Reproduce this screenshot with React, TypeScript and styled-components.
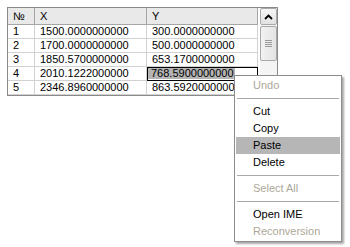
import React from "react";
import styled, { createGlobalStyle } from "styled-components";

const GlobalStyle = createGlobalStyle`
  html, body { margin: 0; padding: 0; background: #ffffff; }
  body { font-family: "Liberation Sans", "DejaVu Sans", Arial, sans-serif; }
`;

const Page = styled.div`
  position: relative;
  width: 350px;
  height: 247px;
  padding: 7px 0 0 7px;
  box-sizing: border-box;
  background: #ffffff;
  overflow: hidden;
`;

const Frame = styled.div`
  display: flex;
  width: 271px;
  border: 1px solid #8a8a8a;
  box-sizing: border-box;
  background: #ffffff;
`;

const TableArea = styled.div`
  display: flex;
  flex-direction: column;
  width: 250px;
`;

const Row = styled.div<{ $header?: boolean }>`
  display: grid;
  grid-template-columns: 27px 112px 111px;
  height: ${(p) => (p.$header ? 17 : 14)}px;
  background: ${(p) => (p.$header ? "#e9e9e9" : "#ffffff")};
`;

const Cell = styled.div<{ $header?: boolean; $selected?: boolean }>`
  box-sizing: border-box;
  border-right: 1px solid ${(p) => (p.$header ? "#a6a6a6" : "#d2d2d2")};
  border-bottom: 1px solid ${(p) => (p.$header ? "#a6a6a6" : "#d2d2d2")};
  padding-left: ${(p) => (p.$selected ? 1 : 5)}px;
  font-size: 11px;
  line-height: ${(p) => (p.$header ? 16 : 13)}px;
  color: #000000;
  white-space: nowrap;
  overflow: hidden;
  ${(p) =>
    p.$selected
      ? `outline: 1px solid #000; outline-offset: -1px; border-right-color: #000; border-bottom-color: #000; padding-top: 0;`
      : ""}
`;

const Selection = styled.span`
  display: inline-block;
  height: 12px;
  line-height: 12px;
  margin-top: 0;
  padding: 0 1px 0 3px;
  background: #b4b4b4;
`;

const ScrollBar = styled.div`
  display: flex;
  flex-direction: column;
  width: 17px;
  margin-left: 2px;
  background: #f3f3f3;
`;

const ArrowButton = styled.div`
  height: 17px;
  box-sizing: border-box;
  border: 1px solid #a9a9a9;
  border-radius: 2px;
  background: linear-gradient(#f6f6f6, #e2e2e2);
  display: flex;
  align-items: center;
  justify-content: center;
`;

const Thumb = styled.div`
  margin-top: 1px;
  height: 35px;
  box-sizing: border-box;
  border: 1px solid #a9a9a9;
  border-radius: 2px;
  background: linear-gradient(90deg, #f2f2f2, #e4e4e4);
  display: flex;
  align-items: center;
  justify-content: center;
`;

const Track = styled.div`
  flex: 1;
  background: #f4f4f4;
`;

const Menu = styled.div`
  position: absolute;
  left: 234px;
  top: 75px;
  width: 108px;
  box-sizing: border-box;
  padding: 1px;
  border: 1px solid #8c8c8c;
  background: #ffffff;
  box-shadow: 2px 2px 2px rgba(0, 0, 0, 0.35);
  font-size: 11px;
`;

const MenuItem = styled.div<{ $disabled?: boolean; $active?: boolean }>`
  height: 17px;
  line-height: 17px;
  padding-left: 17px;
  color: ${(p) => (p.$disabled ? "#aca899" : "#000000")};
  background: ${(p) => (p.$active ? "#b6b6b6" : "transparent")};
  white-space: nowrap;
`;

const Separator = styled.div`
  height: 9px;
  display: flex;
  align-items: center;
  padding: 0 1px;
  &::after {
    content: "";
    flex: 1;
    height: 1px;
    background: #a9a9a9;
  }
`;

const rows = [
  ["1", "1500.0000000000", "300.0000000000"],
  ["2", "1700.0000000000", "500.0000000000"],
  ["3", "1850.5700000000", "653.1700000000"],
  ["4", "2010.1222000000", "768.5900000000"],
  ["5", "2346.8960000000", "863.5920000000"],
];

type Entry = { label?: string; disabled?: boolean; active?: boolean; sep?: boolean };

const menu: Entry[] = [
  { label: "Undo", disabled: true },
  { sep: true },
  { label: "Cut" },
  { label: "Copy" },
  { label: "Paste", active: true },
  { label: "Delete" },
  { sep: true },
  { label: "Select All", disabled: true },
  { sep: true },
  { label: "Open IME" },
  { label: "Reconversion", disabled: true },
];

export default function App() {
  return (
    <>
      <GlobalStyle />
      <Page>
        <Frame>
          <TableArea>
            <Row $header>
              <Cell $header>№</Cell>
              <Cell $header>X</Cell>
              <Cell $header>Y</Cell>
            </Row>
            {rows.map((r, i) => (
              <Row key={r[0]}>
                <Cell>{r[0]}</Cell>
                <Cell>{r[1]}</Cell>
                {i === 3 ? (
                  <Cell $selected>
                    <Selection>{r[2]}</Selection>
                  </Cell>
                ) : (
                  <Cell>{r[2]}</Cell>
                )}
              </Row>
            ))}
          </TableArea>
          <ScrollBar>
            <ArrowButton>
              <svg width="9" height="6" viewBox="0 0 9 6">
                <path d="M1 5 L4.5 1.5 L8 5" fill="none" stroke="#000" strokeWidth="1.8" />
              </svg>
            </ArrowButton>
            <Thumb>
              <svg width="7" height="7" viewBox="0 0 7 7">
                <path d="M0 0.5H7M0 2.5H7M0 4.5H7M0 6.5H7" stroke="#9a9a9a" strokeWidth="1" />
              </svg>
            </Thumb>
            <Track />
          </ScrollBar>
        </Frame>
        <Menu>
          {menu.map((m, i) =>
            m.sep ? (
              <Separator key={i} />
            ) : (
              <MenuItem key={i} $disabled={m.disabled} $active={m.active}>
                {m.label}
              </MenuItem>
            )
          )}
        </Menu>
      </Page>
    </>
  );
}
